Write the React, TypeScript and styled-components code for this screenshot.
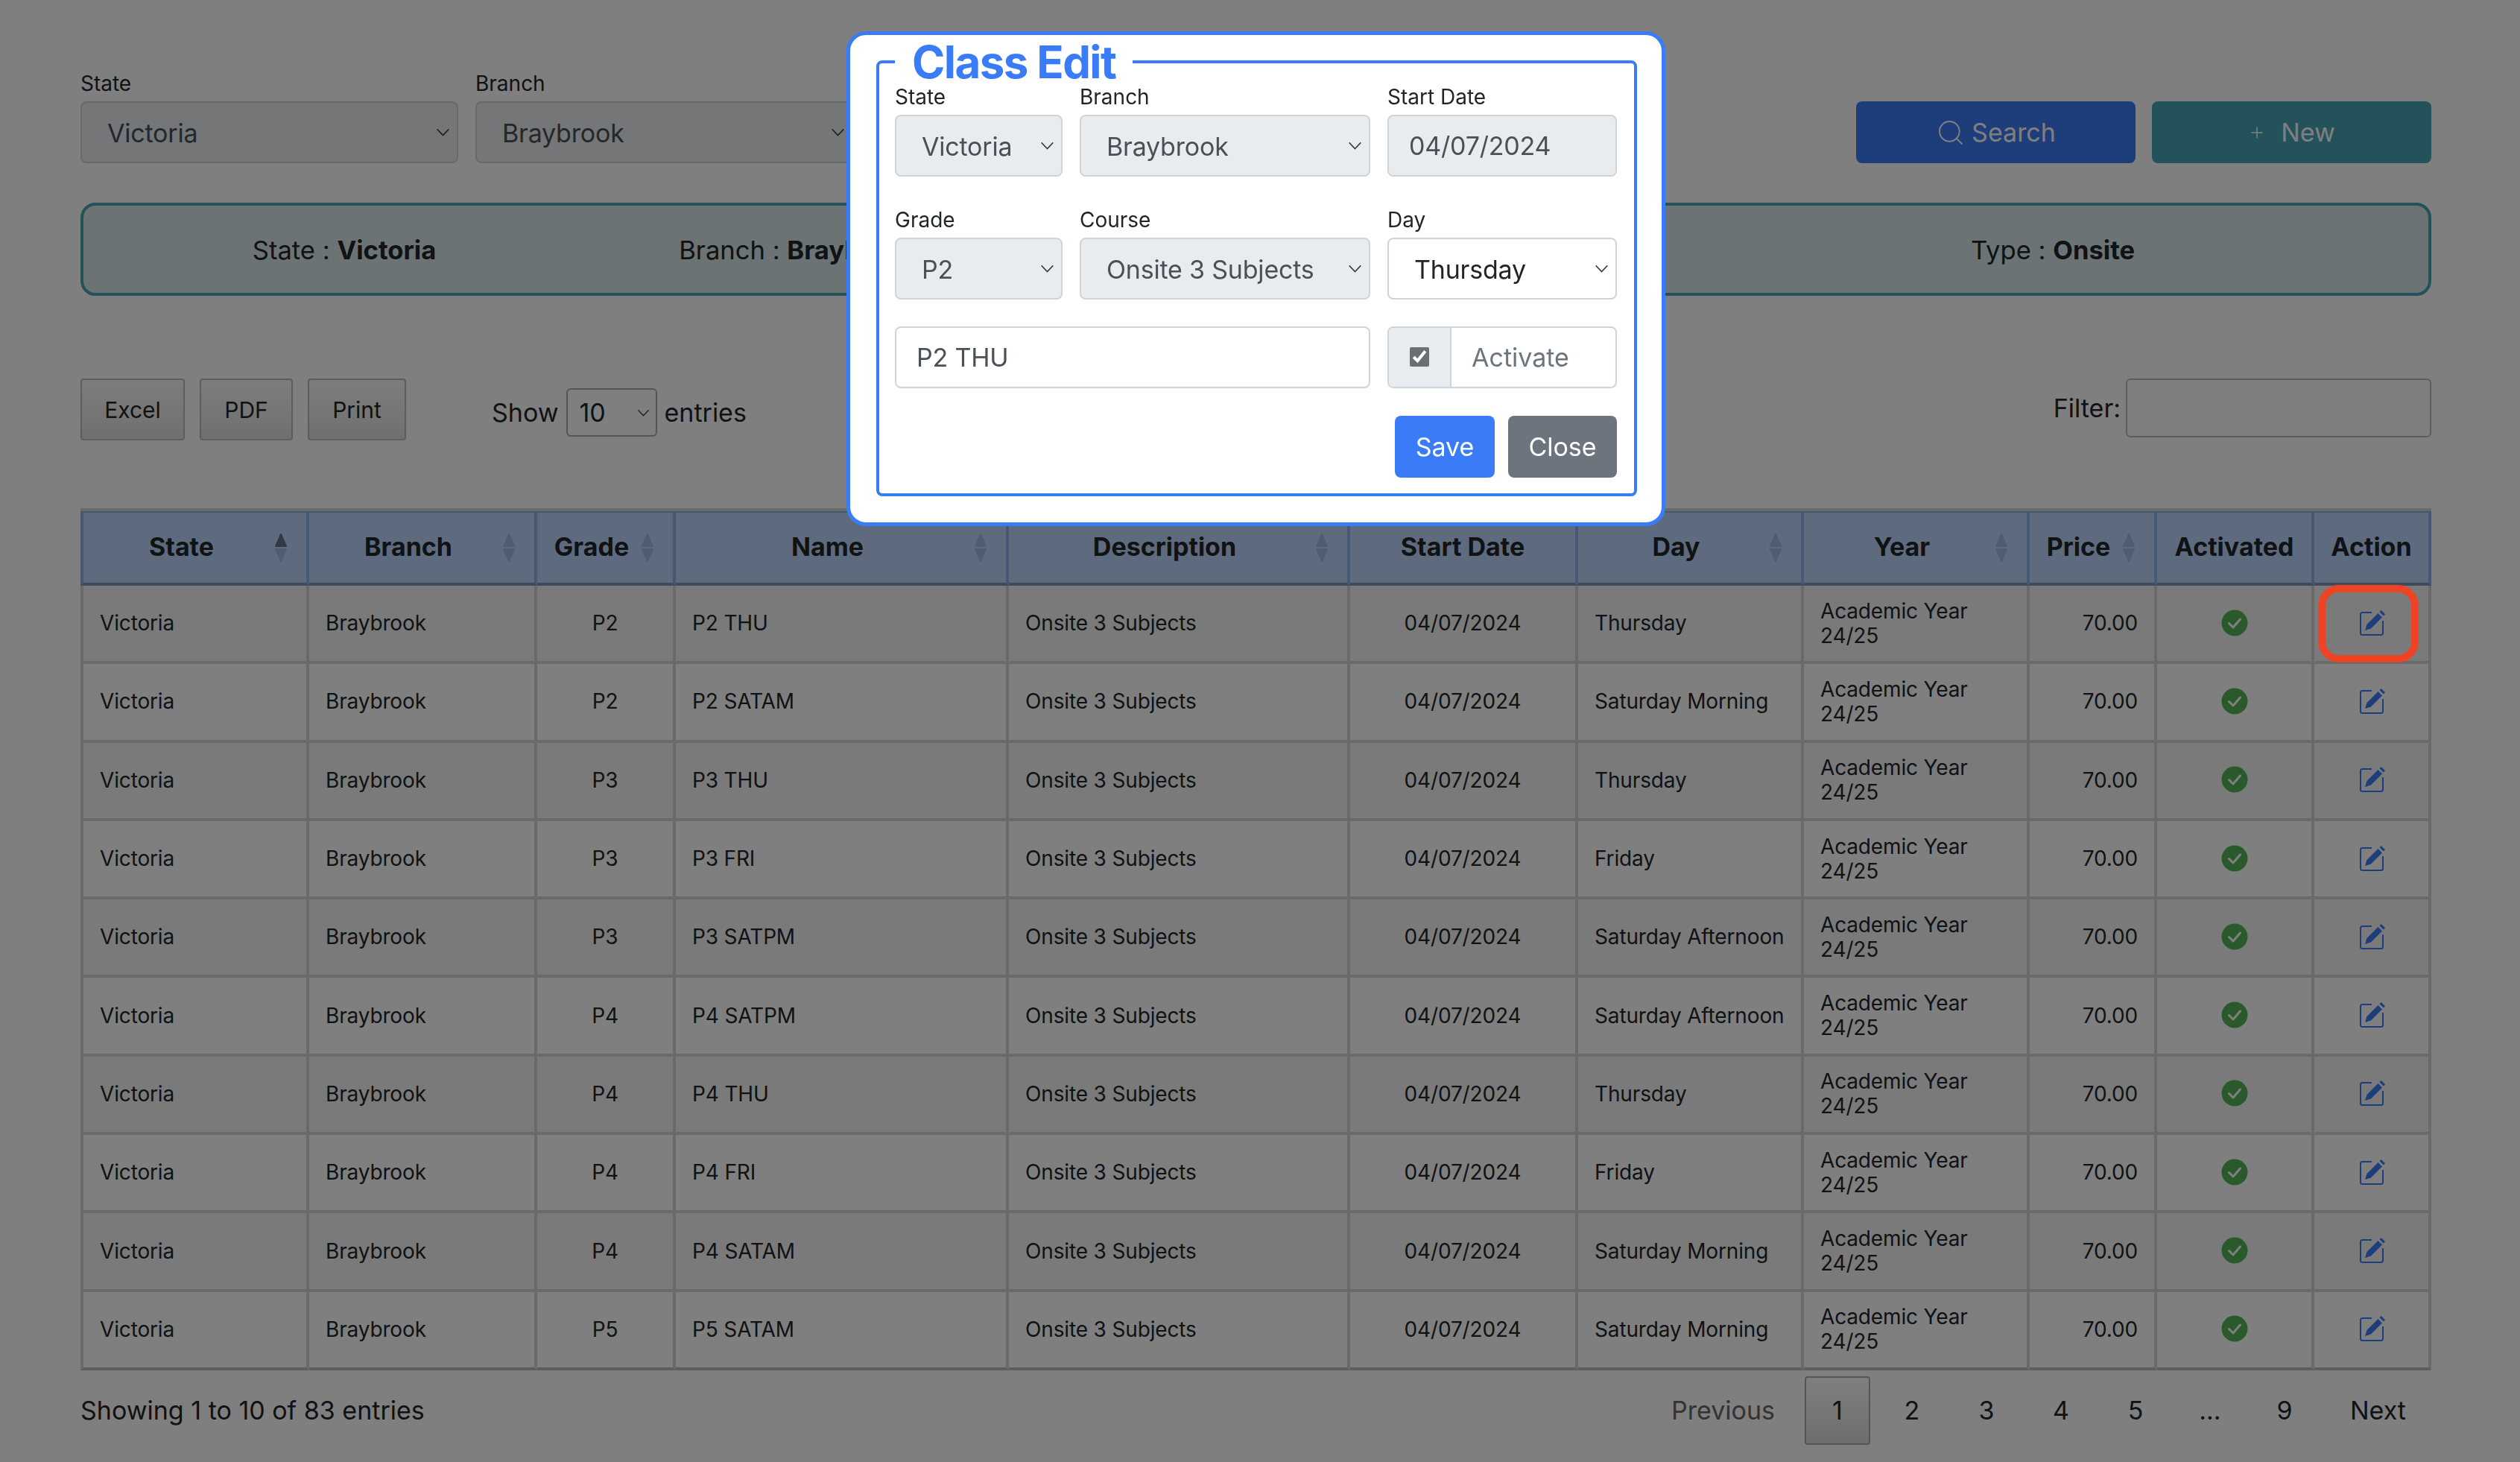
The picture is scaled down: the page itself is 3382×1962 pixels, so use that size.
import React from 'react';
import styled, { createGlobalStyle } from 'styled-components';
import { Plus, Search } from 'lucide-react';

const primary = '#3a7bf7';
const teal = '#48a4b6';
const chevron =
  "url(\"data:image/svg+xml,%3Csvg xmlns='http://www.w3.org/2000/svg' viewBox='0 0 20 12'%3E%3Cpath d='M1.5 1.5 10 10.5l8.5-9' fill='none' stroke='%23343a40' stroke-width='1.6'/%3E%3C/svg%3E\")";

const GlobalStyle = createGlobalStyle`
  html, body {
    margin: 0;
    background: #fff;
    font-family: Inter, 'Liberation Sans', sans-serif;
    color: #212529;
  }
`;

const Page = styled.div`
  width: 3382px;
  height: 1962px;
  box-sizing: border-box;
  padding: 92px 119px 0 108px;
  overflow: hidden;
`;

const TopBar = styled.div`
  display: flex;
  justify-content: space-between;
  align-items: flex-end;
  height: 127px;
`;

const FilterGroup = styled.div`
  display: flex;
  gap: 23px;
`;

const Field = styled.label`
  display: flex;
  flex-direction: column;
  gap: 7px;
  font-size: 28px;
  line-height: 34px;
`;

const PageSelect = styled.select`
  appearance: none;
  width: 507px;
  height: 83px;
  box-sizing: border-box;
  padding: 2px 34px 0;
  border: 2px solid #ced4da;
  border-radius: 8px;
  background: #e9ecef ${chevron} no-repeat right 9px center / 19px 11px;
  font: 34px Inter, sans-serif;
  letter-spacing: -0.2px;
  color: #495057;
  opacity: 1;
`;

const ActionGroup = styled.div`
  display: flex;
  gap: 22px;
`;

const ActionButton = styled.button<{ $bg: string }>`
  display: flex;
  justify-content: center;
  align-items: center;
  gap: ${(p) => (p.$bg === primary ? 8 : 20)}px;
  width: 375px;
  height: 83px;
  border: 0;
  border-radius: 8px;
  background: ${(p) => p.$bg};
  color: #fff;
  font: 34px Inter, sans-serif;
`;

const InfoPanel = styled.div`
  display: grid;
  grid-template-columns: 700px 518px 921px 1fr;
  align-items: center;
  height: 125px;
  box-sizing: border-box;
  margin-top: 53px;
  border: 4px solid ${teal};
  border-radius: 20px;
  background: #d6e6ea;
  font-size: 34.6px;
  text-align: center;
`;

const Controls = styled.div`
  display: flex;
  align-items: flex-start;
  margin-top: 111px;
  height: 174px;
`;

const ExportButton = styled.button<{ $w: number }>`
  width: ${(p) => p.$w}px;
  height: 83px;
  box-sizing: border-box;
  margin-right: 20px;
  padding: 0;
  border: 2px solid #bbb;
  border-radius: 4px;
  background: linear-gradient(#fafafa, #e0e0e0);
  color: #212529;
  font: 30px Inter, sans-serif;
`;

const LengthLabel = styled.div`
  display: flex;
  align-items: center;
  gap: 10px;
  margin: 13px 0 0 95px;
  font-size: 34px;
`;

const LengthSelect = styled.select`
  appearance: none;
  width: 122px;
  height: 65px;
  box-sizing: border-box;
  padding: 0 0 0 16px;
  border: 2px solid #aaa;
  border-radius: 6px;
  background: #fff ${chevron} no-repeat right 8px center / 17px 10px;
  font: 34px Inter, sans-serif;
  color: #212529;
`;

const FilterLabel = styled.label`
  display: flex;
  align-items: center;
  gap: 7px;
  margin-left: auto;
  font-size: 34px;
`;

const FilterInput = styled.input`
  width: 410px;
  height: 79px;
  box-sizing: border-box;
  border: 2px solid #bbb;
  border-radius: 6px;
  background: #fff;
`;

const Table = styled.table`
  width: 3155px;
  table-layout: fixed;
  border-collapse: separate;
  border-spacing: 0;
  border-top: 4px solid #d4d4d4;
`;

const Col = styled.col<{ $w: number }>`
  width: ${(p) => p.$w}px;
`;

const Th = styled.th<{ $sortable?: boolean }>`
  position: relative;
  height: 100px;
  box-sizing: border-box;
  padding: 0 ${(p) => (p.$sortable ? 52 : 8)}px 3px ${(p) => (p.$sortable ? 16 : 8)}px;
  border-top: 2px solid #8ab0e8;
  border-right: 4px solid #8ab0e8;
  border-bottom: 4px solid #7e94b4;
  background: #bcd6fe;
  font-size: 34px;
  font-weight: 700;
  text-align: center;
  white-space: nowrap;

  &:first-child {
    border-left: 4px solid #8ab0e8;
  }
`;

const SortIcon = styled.svg`
  position: absolute;
  top: 27px;
  right: 24px;
  width: 20px;
  height: 40px;
`;

const Tr = styled.tr`
  &:nth-child(odd) td {
    background: #f5f5f5;
  }
  &:last-child td {
    border-bottom-color: #bbb;
  }
`;

const Td = styled.td<{ $align?: string }>`
  position: relative;
  height: 105.3px;
  box-sizing: border-box;
  padding: 0 ${(p) => (p.$align === 'right' ? 22 : 8)}px 0 22px;
  border-right: 4px solid #d4d4d4;
  border-bottom: 4px solid #d4d4d4;
  font-size: 28px;
  line-height: 33px;
  letter-spacing: -0.15px;
  text-align: ${(p) => p.$align || 'left'};

  &:first-child {
    border-left: 4px solid #d4d4d4;
  }
`;

const IconCell = styled.svg`
  display: block;
  margin: -2px auto 0;
  width: 36px;
  height: 36px;
`;

const IconTd = styled(Td)`
  padding: 0;
`;

const Highlight = styled.div`
  position: absolute;
  z-index: 30;
  top: -1px;
  left: 5px;
  width: 135px;
  height: 104px;
  box-sizing: border-box;
  border: 10px solid #ee4426;
  border-radius: 28px;
`;

const Footer = styled.div`
  display: flex;
  justify-content: space-between;
  align-items: center;
  margin-top: 8px;
  height: 92px;
  font-size: 34px;
`;

const Pager = styled.div`
  display: flex;
  align-items: center;
  gap: 12px;
  padding-right: 2px;
`;

const PageLink = styled.div<{ $active?: boolean; $muted?: boolean; $text?: boolean }>`
  width: ${(p) => (p.$text ? 'auto' : '88px')};
  height: 92px;
  box-sizing: border-box;
  padding: 0 ${(p) => (p.$muted ? 26 : p.$text ? 30 : 0)}px 0 ${(p) => (p.$text ? 30 : 0)}px;
  display: flex;
  justify-content: center;
  align-items: center;
  border: 2px solid ${(p) => (p.$active ? '#aaa' : 'transparent')};
  border-radius: 4px;
  background: ${(p) => (p.$active ? 'linear-gradient(#fff, #dcdcdc)' : 'none')};
  color: ${(p) => (p.$muted ? '#666' : '#212529')};
`;

const Overlay = styled.div`
  position: fixed;
  inset: 0;
  z-index: 10;
  background: rgba(0, 0, 0, 0.5);
`;

const Modal = styled.div`
  position: fixed;
  z-index: 20;
  top: 42px;
  left: 1136px;
  width: 1099px;
  box-sizing: border-box;
  padding: 6px 35px 35px;
  border: 5px solid ${primary};
  border-radius: 26px;
  background: #fff;
`;

const Fieldset = styled.fieldset`
  margin: 0;
  padding: 0 23px 21px 21px;
  border: 4px solid ${primary};
  border-radius: 8px;
`;

const Legend = styled.legend`
  padding: 0 23px;
  color: ${primary};
  font-size: 60px;
  font-weight: 700;
  letter-spacing: -1.6px;
  line-height: 60px;
`;

const FormGrid = styled.div`
  display: grid;
  grid-template-columns: 225px 390px 308px;
  column-gap: 23px;
  row-gap: 41px;
`;

const ModalSelect = styled.select<{ $enabled?: boolean }>`
  appearance: none;
  width: 100%;
  height: 83px;
  box-sizing: border-box;
  padding: 2px 30px 0 34px;
  border: 2px solid #ced4da;
  border-radius: 8px;
  background: ${(p) => (p.$enabled ? '#fff' : '#e9ecef')} ${chevron} no-repeat right 9px center / 19px 11px;
  font: 34px Inter, sans-serif;
  letter-spacing: -0.2px;
  color: ${(p) => (p.$enabled ? '#212529' : '#495057')};
  opacity: 1;
`;

const ModalInput = styled.input<{ $disabled?: boolean }>`
  width: 100%;
  height: 83px;
  box-sizing: border-box;
  padding: 0 27px;
  border: 2px solid #ced4da;
  border-radius: 8px;
  background: ${(p) => (p.$disabled ? '#e9ecef' : '#fff')};
  font: 34px Inter, sans-serif;
  letter-spacing: -0.2px;
  color: #495057;
  opacity: 1;
`;

const NameRow = styled.div`
  display: grid;
  grid-template-columns: 638px 308px;
  column-gap: 23px;
  margin-top: 36px;
`;

const InputGroup = styled.div`
  display: flex;
  height: 83px;
  box-sizing: border-box;
  border: 2px solid #ced4da;
  border-radius: 8px;
  font-size: 34px;
  color: #6c757d;
`;

const CheckBlock = styled.div`
  display: flex;
  justify-content: center;
  align-items: center;
  width: 82px;
  border-right: 2px solid #ced4da;
  border-radius: 6px 0 0 6px;
  background: #e9ecef;
`;

const CheckBox = styled.input`
  width: 26px;
  height: 26px;
  margin: 0 0 2px;
  accent-color: #6b6f73;
`;

const ActivateText = styled.div`
  display: flex;
  align-items: center;
  padding-left: 27px;
`;

const ModalActions = styled.div`
  display: flex;
  justify-content: flex-end;
  gap: 18px;
  margin-top: 37px;
`;

const ModalButton = styled.button<{ $bg: string; $w: number }>`
  width: ${(p) => p.$w}px;
  height: 83px;
  padding: 0;
  border: 0;
  border-radius: 8px;
  background: ${(p) => p.$bg};
  color: #fff;
  font: 34px Inter, sans-serif;
`;

const columns = [
  { w: 307, label: 'State', sort: true },
  { w: 306, label: 'Branch', sort: true },
  { w: 186, label: 'Grade', sort: true },
  { w: 447, label: 'Name', sort: true },
  { w: 458, label: 'Description', sort: true },
  { w: 306, label: 'Start Date', sort: false },
  { w: 303, label: 'Day', sort: true },
  { w: 303, label: 'Year', sort: true },
  { w: 171, label: 'Price', sort: true },
  { w: 211, label: 'Activated', sort: false },
  { w: 157, label: 'Action', sort: false },
];

const rows = [
  ['P2', 'P2 THU', 'Thursday'],
  ['P2', 'P2 SATAM', 'Saturday Morning'],
  ['P3', 'P3 THU', 'Thursday'],
  ['P3', 'P3 FRI', 'Friday'],
  ['P3', 'P3 SATPM', 'Saturday Afternoon'],
  ['P4', 'P4 SATPM', 'Saturday Afternoon'],
  ['P4', 'P4 THU', 'Thursday'],
  ['P4', 'P4 FRI', 'Friday'],
  ['P4', 'P4 SATAM', 'Saturday Morning'],
  ['P5', 'P5 SATAM', 'Saturday Morning'],
];

const SortArrows = ({ active }: { active?: boolean }) => (
  <SortIcon viewBox="0 0 20 40">
    <path
      d="M10 2 17 18H3Z"
      fill={active ? '#5e748a' : '#9ebae4'}
      stroke={active ? '#5e748a' : '#9ebae4'}
      strokeWidth="2"
      strokeLinejoin="round"
    />
    <path d="M3 22H17L10 38Z" fill="#9ebae4" stroke="#9ebae4" strokeWidth="2" strokeLinejoin="round" />
  </SortIcon>
);

const CheckIcon = () => (
  <IconCell viewBox="0 0 36 36">
    <circle cx="18" cy="18" r="17.5" fill="#55b458" />
    <path d="M10.500 18.500 16 24l9.500-11" fill="none" stroke="#fff" strokeWidth="3" strokeLinecap="round" strokeLinejoin="round" />
  </IconCell>
);

const EditIcon = () => (
  <IconCell viewBox="0 0 36 36">
    <path
      d="M18 4H5.500A2.500 2.500 0 0 0 3 6.500v25A2.500 2.500 0 0 0 5.500 34h25a2.500 2.500 0 0 0 2.500-2.500V15"
      fill="none"
      stroke={primary}
      strokeWidth="2"
    />
    <path d="M9 28l2.500-8L26.500 5l5.500 5.500L17 25.500Z" fill={primary} />
    <path d="M28.500 3.200 30.700 1 36 6.300 33.800 8.500Z" fill={primary} />
  </IconCell>
);

export default function App() {
  return (
    <>
      <GlobalStyle />
      <Page>
        <TopBar>
          <FilterGroup>
            <Field>
              State
              <PageSelect disabled>
                <option>Victoria</option>
              </PageSelect>
            </Field>
            <Field>
              Branch
              <PageSelect disabled>
                <option>Braybrook</option>
              </PageSelect>
            </Field>
          </FilterGroup>
          <ActionGroup>
            <ActionButton $bg={primary}>
              <Search size={40} strokeWidth={1.2} />
              Search
            </ActionButton>
            <ActionButton $bg={teal}>
              <Plus size={24} strokeWidth={1.5} />
              New
            </ActionButton>
          </ActionGroup>
        </TopBar>

        <InfoPanel>
          <div>
            State : <b>Victoria</b>
          </div>
          <div>
            Branch : <b>Braybrook</b>
          </div>
          <div />
          <div>
            Type : <b>Onsite</b>
          </div>
        </InfoPanel>

        <Controls>
          <ExportButton $w={140}>Excel</ExportButton>
          <ExportButton $w={125}>PDF</ExportButton>
          <ExportButton $w={132}>Print</ExportButton>
          <LengthLabel>
            Show
            <LengthSelect>
              <option>10</option>
            </LengthSelect>
            entries
          </LengthLabel>
          <FilterLabel>
            Filter:
            <FilterInput />
          </FilterLabel>
        </Controls>

        <Table>
          <colgroup>
            {columns.map((c) => (
              <Col key={c.label} $w={c.w} />
            ))}
          </colgroup>
          <thead>
            <tr>
              {columns.map((c, i) => (
                <Th key={c.label} $sortable={c.sort}>
                  {c.label}
                  {c.sort && <SortArrows active={i === 0} />}
                </Th>
              ))}
            </tr>
          </thead>
          <tbody>
            {rows.map((r, i) => (
              <Tr key={r[1]}>
                <Td>Victoria</Td>
                <Td>Braybrook</Td>
                <IconTd $align="center">{r[0]}</IconTd>
                <Td>{r[1]}</Td>
                <Td>Onsite 3 Subjects</Td>
                <IconTd $align="center">04/07/2024</IconTd>
                <Td>{r[2]}</Td>
                <Td>
                  Academic Year
                  <br />
                  24/25
                </Td>
                <Td $align="right">70.00</Td>
                <IconTd $align="center">
                  <CheckIcon />
                </IconTd>
                <IconTd $align="center">
                  <EditIcon />
                  {i === 0 && <Highlight />}
                </IconTd>
              </Tr>
            ))}
          </tbody>
        </Table>

        <Footer>
          <div>Showing 1 to 10 of 83 entries</div>
          <Pager>
            <PageLink $text $muted>
              Previous
            </PageLink>
            <PageLink $active>1</PageLink>
            <PageLink>2</PageLink>
            <PageLink>3</PageLink>
            <PageLink>4</PageLink>
            <PageLink>5</PageLink>
            <PageLink>...</PageLink>
            <PageLink>9</PageLink>
            <PageLink $text>Next</PageLink>
          </Pager>
        </Footer>
      </Page>

      <Overlay />

      <Modal>
        <Fieldset>
          <Legend>Class Edit</Legend>
          <FormGrid>
            <Field>
              State
              <ModalSelect disabled>
                <option>Victoria</option>
              </ModalSelect>
            </Field>
            <Field>
              Branch
              <ModalSelect disabled>
                <option>Braybrook</option>
              </ModalSelect>
            </Field>
            <Field>
              Start Date
              <ModalInput $disabled disabled defaultValue="04/07/2024" />
            </Field>
            <Field>
              Grade
              <ModalSelect disabled>
                <option>P2</option>
              </ModalSelect>
            </Field>
            <Field>
              Course
              <ModalSelect disabled>
                <option>Onsite 3 Subjects</option>
              </ModalSelect>
            </Field>
            <Field>
              Day
              <ModalSelect $enabled>
                <option>Thursday</option>
              </ModalSelect>
            </Field>
          </FormGrid>
          <NameRow>
            <ModalInput defaultValue="P2 THU" />
            <InputGroup>
              <CheckBlock>
                <CheckBox type="checkbox" defaultChecked />
              </CheckBlock>
              <ActivateText>Activate</ActivateText>
            </InputGroup>
          </NameRow>
          <ModalActions>
            <ModalButton $bg={primary} $w={134}>
              Save
            </ModalButton>
            <ModalButton $bg="#6c757d" $w={146}>
              Close
            </ModalButton>
          </ModalActions>
        </Fieldset>
      </Modal>
    </>
  );
}
